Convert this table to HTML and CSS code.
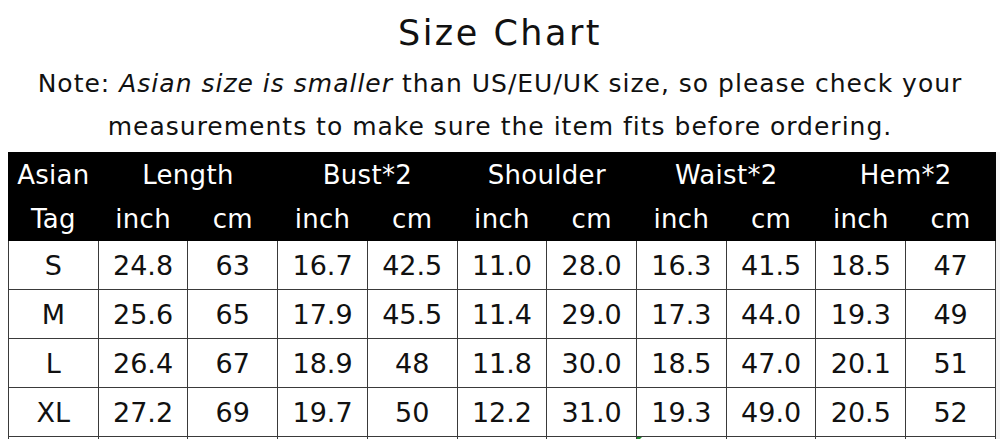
FILE: index.html
```html
<!DOCTYPE html>
<html>
<head>
<meta charset="utf-8">
<link rel="stylesheet" href="styles.css">
</head>
<body>
<div class="page">
  <h1 class="title">Size Chart</h1>
  <p class="note">Note: <span class="it">Asian size is smaller</span> than US/EU/UK size, so please check your<br>measurements to make sure the item fits before ordering.</p>
  <div class="table-wrap">
    <table class="chart">
      <thead>
        <tr class="h1">
          <th>Asian</th>
          <th colspan="2">Length</th>
          <th colspan="2">Bust*2</th>
          <th colspan="2">Shoulder</th>
          <th colspan="2">Waist*2</th>
          <th colspan="2">Hem*2</th>
        </tr>
        <tr class="h2">
          <th>Tag</th>
          <th>inch</th><th>cm</th>
          <th>inch</th><th>cm</th>
          <th>inch</th><th>cm</th>
          <th>inch</th><th>cm</th>
          <th>inch</th><th>cm</th>
        </tr>
      </thead>
      <tbody>
        <tr><td>S</td><td>24.8</td><td>63</td><td>16.7</td><td>42.5</td><td>11.0</td><td>28.0</td><td>16.3</td><td>41.5</td><td>18.5</td><td>47</td></tr>
        <tr><td>M</td><td>25.6</td><td>65</td><td>17.9</td><td>45.5</td><td>11.4</td><td>29.0</td><td>17.3</td><td>44.0</td><td>19.3</td><td>49</td></tr>
        <tr><td>L</td><td>26.4</td><td>67</td><td>18.9</td><td>48</td><td>11.8</td><td>30.0</td><td>18.5</td><td>47.0</td><td>20.1</td><td>51</td></tr>
        <tr><td>XL</td><td>27.2</td><td>69</td><td>19.7</td><td>50</td><td>12.2</td><td>31.0</td><td>19.3</td><td>49.0</td><td>20.5</td><td>52</td></tr>
        <tr class="cut"><td></td><td></td><td></td><td></td><td></td><td></td><td></td><td class="mark"></td><td></td><td></td><td></td></tr>
      </tbody>
    </table>
    <div class="gutter"></div>
  </div>
</div>
</body>
</html>
```

FILE: styles.css
```css
html, body {
  margin: 0;
  padding: 0;
  background: #ffffff;
}
.page {
  width: 1000px;
  height: 439px;
  overflow: hidden;
  font-family: "DejaVu Sans", "Liberation Sans", sans-serif;
  color: #111;
}
.title {
  margin: 0;
  font-weight: normal;
  font-size: 35px;
  letter-spacing: 2.5px;
  line-height: 66px;
  height: 62px;
  text-align: center;
}
.note {
  margin: 0;
  font-size: 25px;
  line-height: 43px;
  text-align: center;
  height: 90px;
  letter-spacing: 1px;
}
.note .it {
  font-style: italic;
}
.table-wrap {
  display: flex;
  align-items: flex-start;
}
.chart {
  margin-left: 8px;
  border-collapse: collapse;
  table-layout: fixed;
  width: 988px;
  flex: none;
}
.chart th, .chart td {
  padding: 0;
  text-align: center;
  font-weight: normal;
}
.chart thead th {
  background: #000;
  color: #fff;
  font-size: 26px;
  letter-spacing: 0.3px;
  height: 43px;
  border: 1px solid #000;
}
.chart .h1 th { vertical-align: middle; }
.chart tbody td {
  border: 1px solid #3a3a3a;
  font-size: 27px;
  height: 48px;
}
.chart .cut td { height: 20px; }
.chart td.mark {
  position: relative;
}
.chart td.mark::before {
  content: "";
  position: absolute;
  left: 0;
  top: 0;
  width: 0;
  height: 0;
  border-top: 5px solid #1a8a2a;
  border-right: 5px solid transparent;
}
.gutter {
  flex: 1;
  align-self: stretch;
  background: #f4f4f4;
}
```
